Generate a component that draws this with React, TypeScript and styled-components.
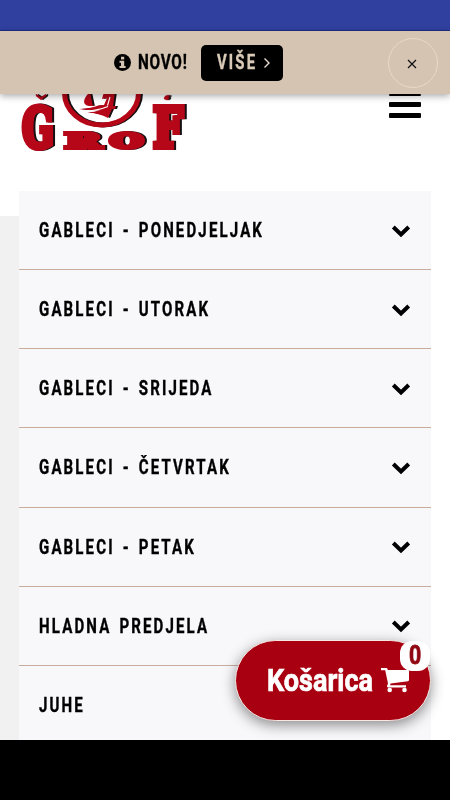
import React from "react";
import styled, { createGlobalStyle } from "styled-components";

const Global = createGlobalStyle`
  body { margin: 0; background: #fff; }
  * { box-sizing: border-box; }
`;

const Screen = styled.div`
  width: 450px;
  height: 800px;
  display: flex;
  flex-direction: column;
  overflow: hidden;
  background: #fff;
  color: #000;
  font-family: Roboto, "Liberation Sans", sans-serif;
  font-weight: 700;
`;

const StatusBar = styled.div`
  height: 31px;
  flex: none;
  background: #2f409f;
  border-bottom: 1px solid #202c86;
`;

const Notice = styled.div`
  height: 63px;
  flex: none;
  display: grid;
  grid-template-columns: 114px 24px 63px 82px 1fr 50px 12px;
  align-items: center;
  background: #d5c4b1;
  box-shadow: 0 2px 7px rgba(0, 0, 0, 0.35);
  z-index: 2;
  svg { display: block; }
`;

const InfoCell = styled.div`
  grid-column: 2;
`;

const Condensed = styled.span<{ $size: number; $scale: number; $spacing?: number; $weight?: number }>`
  display: block;
  white-space: nowrap;
  font-size: ${(p) => p.$size}px;
  line-height: 1.2;
  letter-spacing: ${(p) => p.$spacing ?? 0}px;
  word-spacing: 3px;
  -webkit-text-stroke: ${(p) => p.$weight ?? 0.4}px currentColor;
  transform: scaleX(${(p) => p.$scale});
  transform-origin: left center;
`;

const MoreButton = styled.button`
  width: 82px;
  height: 36px;
  padding: 0 12px 0 16px;
  display: grid;
  grid-template-columns: 46px 8px;
  align-items: center;
  border: 0;
  border-radius: 5px;
  background: #000;
  color: #d9c9b7;
  font: inherit;
  text-align: left;
`;

const CloseButton = styled.button`
  grid-column: 6;
  width: 50px;
  height: 50px;
  padding: 2px 2px 0 0;
  display: flex;
  align-items: center;
  justify-content: center;
  border: 1px solid #e8dac8;
  border-radius: 50%;
  background: transparent;
`;

const Content = styled.main`
  height: 646px;
  flex: none;
  overflow: hidden;
  background: linear-gradient(#f1f1f1, #f1f1f1) 0 122px / 19px 100% no-repeat #fff;
`;

const Header = styled.header`
  height: 97px;
  padding: 0 29px 0 19px;
  display: flex;
  justify-content: space-between;
  align-items: flex-start;
`;

const Menu = styled.div`
  width: 32px;
  height: 24px;
  display: flex;
  flex-direction: column;
  justify-content: space-between;
`;

const Bar = styled.i<{ $height: number }>`
  height: ${(p) => p.$height}px;
  border-radius: 1px;
  background: #000;
`;

const Accordion = styled.div`
  width: 412px;
  margin-left: 19px;
  background: #f8f8fb;
`;

const Row = styled.div`
  height: 79.17px;
  padding: 1px 20px 0;
  display: flex;
  align-items: center;
  justify-content: space-between;
  border-bottom: 1px solid #c8ad9d;
`;

const Footer = styled.div`
  flex: 1;
  background: #000;
  z-index: 3;
`;

const Cart = styled.button`
  position: absolute;
  left: 235px;
  top: 640px;
  width: 196px;
  height: 81px;
  padding: 0 0 0 31px;
  display: grid;
  grid-template-columns: 114px 30px;
  align-items: center;
  border: 1.5px solid #f6e7e3;
  border-radius: 41px;
  background: #a90011;
  color: #fff;
  font: inherit;
  text-align: left;
  box-shadow: 0 4px 14px rgba(0, 0, 0, 0.45);
  z-index: 2;
`;

const Count = styled.span`
  position: absolute;
  right: 0;
  top: 0;
  width: 30px;
  height: 30px;
  padding-left: 9px;
  display: flex;
  align-items: center;
  border-radius: 12px;
  background: #fff;
  color: #8f0710;
`;

const Shadowed = styled.g`
  filter: drop-shadow(2.5px 0.5px 0 #171012);
  fill: #b60718;
  stroke: #b60718;
  font-family: "DejaVu Serif", serif;
  font-weight: 700;
`;

const sections = [
  "GABLECI - PONEDJELJAK",
  "GABLECI - UTORAK",
  "GABLECI - SRIJEDA",
  "GABLECI - ČETVRTAK",
  "GABLECI - PETAK",
  "HLADNA PREDJELA",
  "JUHE",
];

const Logo = () => (
  <svg width="170" height="60" viewBox="0 0 170 60" role="img" aria-label="Grof">
    <Shadowed>
      <ellipse cx="82.500" cy="-1" rx="37" ry="32" fill="none" strokeWidth="5" />
    </Shadowed>
    <Shadowed>
      <path d="M71-2C63 5 63 12 72 12L85 11L88 4L83 5L85-2H96L94 12H97L96 15H93L89 24Q80 19 68 18.500Q76 18 82 16Q72 17 60 15Q69 14.500 74 12.500" stroke="none" />
    </Shadowed>
    <path d="M61 16.800Q75 18 89 12.500M68 13.500Q77 13 83 8.500M88.500 11.500L91 3" fill="none" stroke="#fff" strokeWidth="1.100" />
    <Shadowed>
      <text x="3" y="53" fontSize="55" textLength="32" lengthAdjust="spacingAndGlyphs" strokeWidth="6">G</text>
      <text x="46" y="53.500" fontSize="21" textLength="36" lengthAdjust="spacingAndGlyphs" strokeWidth="3.800">R</text>
      <text x="91" y="53.500" fontSize="21" textLength="33" lengthAdjust="spacingAndGlyphs" strokeWidth="4">O</text>
      <text x="134" y="53" fontSize="54" textLength="30" lengthAdjust="spacingAndGlyphs" strokeWidth="6">F</text>
      <path d="M17 0l5 3 5-3v2l-5 4-5-4zM145 5c0-3 3-5 6-3l-2 1c2 0 1 3-1 3s-2-1-3-1z" strokeWidth=".3" />
    </Shadowed>
  </svg>
);

const Chevron = () => (
  <svg width="20" height="14" viewBox="0 0 20 14">
    <path d="M2.300 3l7.700 7.500L17.700 3" fill="none" stroke="#000" strokeWidth="4" />
  </svg>
);

const InfoIcon = () => (
  <svg width="17" height="17" viewBox="0 0 17 17">
    <circle cx="8.500" cy="8.500" r="8.500" />
    <path d="M7 2.800h3.200v2.700H7zM5.500 6.800h4.700v5.200h1.400v2H5.500v-2H7V8.800H5.500z" fill="#d5c4b1" />
  </svg>
);

const CartIcon = () => (
  <svg width="29" height="25" viewBox="0 0 29 25" fill="#fff">
    <path d="M0 0h5.500q1 0 1.300 2H27q1 0 1 1v9q0 1-1 1.200L9.500 15.500l-.4 1.800H25v2.200H7q-1.200 0-1-1.400l1-2.500L4.200 2.300H0z" />
    <circle cx="8.700" cy="22" r="2.300" />
    <circle cx="23.500" cy="22" r="2.300" />
  </svg>
);

export default function App() {
  return (
    <>
      <Global />
      <Screen>
        <StatusBar />
        <Notice>
          <InfoCell><InfoIcon /></InfoCell>
          <Condensed $size={21} $scale={0.73} $spacing={1}>NOVO!</Condensed>
          <MoreButton>
            <Condensed $size={21} $scale={0.71} $spacing={3}>VIŠE</Condensed>
            <svg width="8" height="12" viewBox="0 0 8 12">
              <path d="M1.5 1.5L6 6l-4.500 4.500" fill="none" stroke="#e9ded2" strokeWidth="1.4" />
            </svg>
          </MoreButton>
          <CloseButton aria-label="Zatvori">
            <svg width="10" height="10" viewBox="0 0 10 10">
              <path d="M1 1l8 8M9 1L1 9" stroke="#111" strokeWidth="1.2" />
            </svg>
          </CloseButton>
        </Notice>
        <Content>
          <Header>
            <Logo />
            <Menu><Bar $height={2} /><Bar $height={5} /><Bar $height={5} /></Menu>
          </Header>
          <Accordion>
            {sections.map((name) => (
              <Row key={name}>
                <Condensed $size={21} $scale={0.715} $spacing={3}>{name}</Condensed>
                <Chevron />
              </Row>
            ))}
          </Accordion>
        </Content>
        <Footer />
        <Cart>
          <Condensed $size={32} $scale={0.845} $weight={0.7}>Košarica</Condensed>
          <CartIcon />
          <Count><Condensed $size={25} $scale={0.85} $weight={0.8}>0</Condensed></Count>
        </Cart>
      </Screen>
    </>
  );
}
